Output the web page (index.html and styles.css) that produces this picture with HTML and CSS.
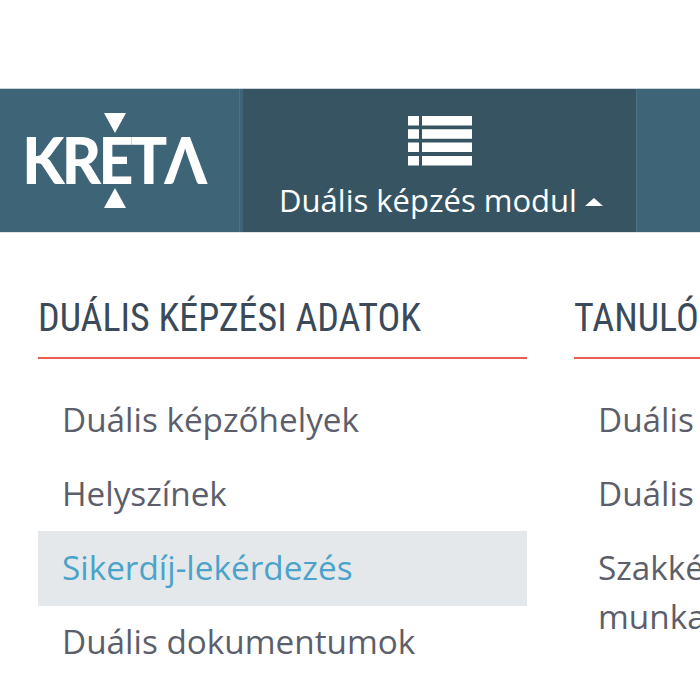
FILE: index.html
```html
<!DOCTYPE html>
<html lang="en">
<head>
    <meta charset="UTF-8">
    <meta name="viewport" content="width=device-width, initial-scale=1.0">
    <title>Kréta</title>
    <link rel="stylesheet" href="styles.css">
</head>
<body>
    <nav class="navbar">
        <a class="brand">
            <span class="brand-mark brand-mark-down"></span>
            <span class="brand-name">KRETΛ</span>
            <span class="brand-mark brand-mark-up"></span>
        </a>
        <a class="nav-item active">
            <svg class="nav-icon" width="64" height="50" viewBox="0 0 64 50">
                <path fill="#fff" d="M0 0h11v9.500H0zM14 0h50v9.500H14zM0 13.300h11v9.500H0zM14 13.300h50v9.500H14zM0 26.600h11v9.500H0zM14 26.600h50v9.500H14zM0 40h11v9.500H0zM14 40h50v9.500H14z"/>
            </svg>
            <span class="nav-label">Duális képzés modul <span class="caret"></span></span>
        </a>
    </nav>

    <div class="menu">
        <section class="menu-col">
            <h3 class="menu-title">DUÁLIS KÉPZÉSI ADATOK</h3>
            <ul class="menu-list">
                <li>Duális képzőhelyek</li>
                <li>Helyszínek</li>
                <li class="selected">Sikerdíj-lekérdezés</li>
                <li>Duális dokumentumok</li>
            </ul>
        </section>
        <section class="menu-col">
            <h3 class="menu-title">TANULÓI ADATOK</h3>
            <ul class="menu-list">
                <li>Duális szerződések</li>
                <li>Duális csoportok</li>
                <li>Szakképzési munkaszerződések</li>
            </ul>
        </section>
    </div>
</body>
</html>
```

FILE: styles.css
```css
html, body {
    height: 700px;
    overflow: hidden;
}
body {
    margin: 0;
    padding-top: 89px;
    background-color: #fff;
    font-family: "Open Sans", sans-serif;
    box-sizing: border-box;
}
.navbar {
    display: flex;
    height: 143px;
    background-color: #3e6577;
    box-shadow: 0 -1px 0 #c9d3d8, 0 1px 0 #dfe5e8;
}
.brand {
    position: relative;
    width: 240px;
    display: flex;
    align-items: center;
    justify-content: center;
    flex: none;
    border-right: 1px solid #4f7384;
    box-sizing: border-box;
}
.brand-name {
    color: #fff;
    font-family: Lato, sans-serif;
    font-weight: 900;
    font-size: 65px;
    line-height: 1;
    letter-spacing: -3px;
    margin: -2px 0 0 -12px;
    transform: scaleX(0.935);
}
.brand-mark {
    position: absolute;
    left: 104px;
    width: 0;
    height: 0;
    border-left: 11px solid transparent;
    border-right: 11px solid transparent;
}
.brand-mark-down {
    top: 24px;
    border-top: 20px solid #fff;
}
.brand-mark-up {
    bottom: 24px;
    border-bottom: 20px solid #fff;
}
.nav-item {
    width: 394px;
    margin-left: 3px;
    flex: none;
    display: flex;
    flex-direction: column;
    align-items: center;
    background-color: #375462;
    border-right: 1px solid #4f7384;
    box-sizing: border-box;
    padding-top: 27px;
}
.nav-icon {
    display: block;
    margin-left: 1px;
}
.nav-label {
    margin: 15px 0 0 3px;
    color: #fff;
    font-size: 31px;
    line-height: 38px;
    white-space: nowrap;
}
.caret {
    display: inline-block;
    width: 0;
    height: 0;
    vertical-align: 6px;
    border-left: 9px solid transparent;
    border-right: 9px solid transparent;
    border-bottom: 8px solid #fff;
}
.menu {
    display: flex;
    gap: 47px;
    padding: 61px 0 0 38px;
}
.menu-col {
    width: 489px;
    flex: none;
}
.menu-title {
    margin: 0;
    height: 64px;
    border-bottom: 2px solid #e8604c;
    color: #3a4a5a;
    font-family: Roboto, sans-serif;
    font-stretch: 75%;
    font-weight: 400;
    font-size: 38px;
    line-height: 50px;
    white-space: nowrap;
}
.menu-list {
    margin: 24px 0 0;
    padding: 0;
    list-style: none;
}
.menu-list li {
    padding: 12.400px 24px;
    color: #5c5f6b;
    font-size: 33.300px;
    line-height: 49px;
}
.menu-list li.selected {
    padding-bottom: 14.400px;
    margin-bottom: -2px;
    background-color: #e5e8eb;
    color: #4aa3c9;
}
```
